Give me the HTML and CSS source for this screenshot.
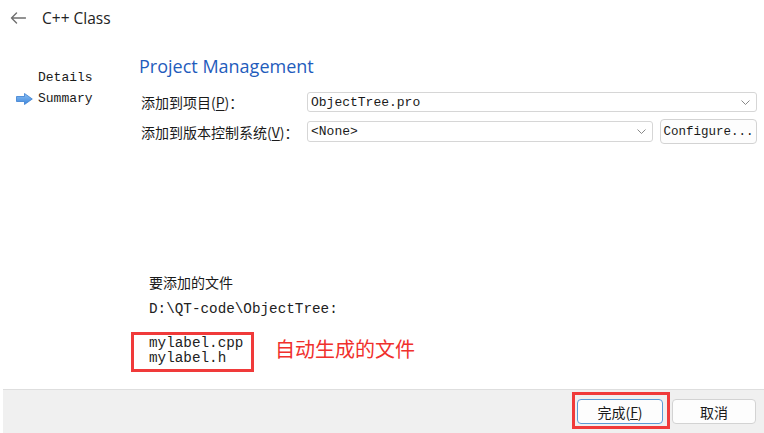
FILE: index.html
```html
<!DOCTYPE html>
<html lang="zh">
<head>
<meta charset="utf-8">
<title>C++ Class</title>
<link rel="stylesheet" href="styles.css">
</head>
<body>
<div class="window">
  <header class="header">
    <svg class="back" width="16" height="12" viewBox="0 0 16 12" aria-hidden="true">
      <path d="M15.5 6H1.5M6.5 1L1.5 6L6.5 11" fill="none" stroke="#6f6f6f" stroke-width="1.4" stroke-linecap="round" stroke-linejoin="round"/>
    </svg>
    <span class="wiz-title">C++ Class</span>
  </header>

  <div class="main">
    <nav class="sidebar">
      <div class="step"><span class="step-icon"></span><span>Details</span></div>
      <div class="step current">
        <span class="step-icon">
          <svg width="17" height="12" viewBox="0 0 17 12" aria-hidden="true">
            <defs>
              <linearGradient id="ag" x1="0" y1="0" x2="0" y2="1">
                <stop offset="0" stop-color="#8cc0f4"/>
                <stop offset="1" stop-color="#3d86dc"/>
              </linearGradient>
            </defs>
            <path d="M0.5 3.5H8.5V0.5L16.3 6L8.5 11.5V8.5H0.5Z" fill="url(#ag)" stroke="#3b7fd0" stroke-width="0.8" stroke-linejoin="round"/>
          </svg>
        </span>
        <span>Summary</span>
      </div>
    </nav>

    <section class="content">
      <h1 class="page-title">Project Management</h1>

      <div class="form">
        <label class="form-label">添加到项目(<u>P</u>)：</label>
        <div class="combo combo-wide">
          <span>ObjectTree.pro</span>
          <svg class="chev" width="9" height="5" viewBox="0 0 9 5" aria-hidden="true"><path d="M0.5 0.5L4.5 4.5L8.5 0.5" fill="none" stroke="#7a7a7a" stroke-width="0.9"/></svg>
        </div>

        <label class="form-label">添加到版本控制系统(<u>V</u>)：</label>
        <div class="combo combo-vcs">
          <span>&lt;None&gt;</span>
          <svg class="chev" width="9" height="5" viewBox="0 0 9 5" aria-hidden="true"><path d="M0.5 0.5L4.5 4.5L8.5 0.5" fill="none" stroke="#7a7a7a" stroke-width="0.9"/></svg>
        </div>
        <button class="btn btn-configure" type="button">Configure...</button>
      </div>

      <div class="files">
        <div class="files-title">要添加的文件</div>
        <div class="files-path">D:\QT-code\ObjectTree:</div>
        <div class="files-row">
          <div class="files-box">
            <div>mylabel.cpp</div>
            <div>mylabel.h</div>
          </div>
          <div class="note">自动生成的文件</div>
        </div>
      </div>
    </section>
  </div>

  <footer class="footer">
    <div class="mark">
      <button class="btn btn-dlg btn-default" type="button">完成(<u>F</u>)</button>
    </div>
    <button class="btn btn-dlg btn-cancel" type="button">取消</button>
  </footer>
</div>
</body>
</html>
```

FILE: styles.css
```css
html, body {
  margin: 0;
  padding: 0;
  background: #ffffff;
}

.window {
  width: 764px;
  height: 433px;
  display: flex;
  flex-direction: column;
  overflow: hidden;
  color: #1a1a1a;
  font-family: "Noto Sans CJK SC", "Noto Sans", sans-serif;
}

/* header */
.header {
  height: 36px;
  flex: none;
  display: flex;
  align-items: center;
  padding-left: 10px;
  box-sizing: border-box;
}

.back {
  display: block;
}

.wiz-title {
  margin-left: 16px;
  font-family: "Open Sans", "Noto Sans", sans-serif;
  font-size: 15.5px;
  color: #222;
}

/* main */
.main {
  flex: 1;
  display: flex;
  min-height: 0;
}

.sidebar {
  width: 139px;
  flex: none;
  padding: 31px 0 0 16px;
  box-sizing: border-box;
  font-family: "Liberation Mono", monospace;
  font-size: 13px;
  color: #1a1a1a;
}

.step {
  height: 21px;
  display: flex;
  align-items: center;
}

.step-icon {
  width: 22px;
  flex: none;
  display: flex;
  align-items: center;
}

.step-icon svg {
  display: block;
}

.content {
  flex: 1;
  display: flex;
  flex-direction: column;
  padding: 18px 0 17px 0;
  min-width: 0;
}

.page-title {
  margin: 0;
  font-family: "Open Sans", "Noto Sans", sans-serif;
  font-weight: 400;
  font-size: 18px;
  line-height: 24px;
  color: #1f5cbc;
}

.form {
  margin: 14px 7px 0 2px;
  display: grid;
  grid-template-columns: 166px 1fr auto;
  row-gap: 7px;
  align-items: center;
}

.form-label {
  font-size: 14px;
  line-height: 20px;
  color: #1a1a1a;
}

.form-label u {
  text-underline-offset: 2px;
}

.combo {
  display: flex;
  align-items: center;
  justify-content: space-between;
  box-sizing: border-box;
  border: 1px solid #d6d6d6;
  border-radius: 3px;
  background: #fff;
  padding: 0 6px 0 3px;
  font-family: "Liberation Mono", monospace;
  font-size: 13px;
  color: #1a1a1a;
}

.combo-wide {
  grid-column: 2 / 4;
  height: 20px;
}

.combo-vcs {
  height: 21px;
  margin-right: 7px;
}

.chev {
  display: block;
}

.btn {
  box-sizing: border-box;
  border: 1px solid #d3d3d3;
  border-radius: 4px;
  background: #fdfdfd;
  color: #1a1a1a;
  padding: 0;
  margin: 0;
}

.btn-configure {
  width: 97px;
  height: 25px;
  font-family: "Liberation Mono", monospace;
  font-size: 12.5px;
}

/* files */
.files {
  margin-top: auto;
  padding-left: 10px;
}

.files-title {
  font-size: 14px;
  line-height: 20px;
  color: #1a1a1a;
}

.files-path {
  margin-top: 10px;
  font-family: "Liberation Mono", monospace;
  font-size: 14.3px;
  line-height: 15px;
  color: #222;
}

.files-row {
  margin-top: 15px;
  display: flex;
  align-items: flex-start;
}

.files-box {
  width: 123px;
  box-sizing: border-box;
  margin-left: -18px;
  border: 3px solid #f03a3a;
  padding: 1px 0 3px 15px;
  font-family: "Liberation Mono", monospace;
  font-size: 14.3px;
  line-height: 15px;
  color: #222;
}

.note {
  margin: 5px 0 0 21px;
  font-size: 20px;
  line-height: 24px;
  color: #f0302c;
}

/* footer */
.footer {
  height: 44px;
  flex: none;
  box-sizing: border-box;
  margin-left: 3px;
  border-top: 1px solid #dedede;
  background: #f0f0f0;
  display: flex;
  justify-content: flex-end;
  align-items: flex-start;
  padding: 2px 8px 0 0;
  gap: 2px;
}

.mark {
  border: 3px solid #f03a3a;
  padding: 4px 4px 2px 2px;
  display: flex;
}

.btn-dlg {
  height: 25px;
  font-family: "Noto Sans CJK SC", sans-serif;
  font-size: 14px;
  line-height: 20px;
}

.btn-default {
  width: 86px;
  border-color: #5b9ad6;
}

.btn-cancel {
  width: 84px;
  margin-top: 7px;
}
```
